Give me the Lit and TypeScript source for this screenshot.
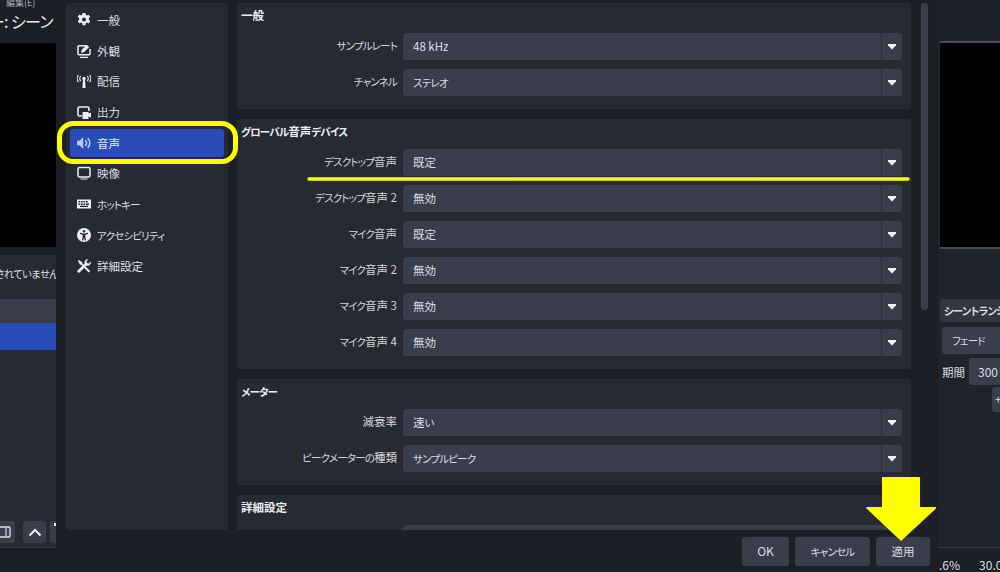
import { LitElement, html, css, svg } from 'lit';
import { customElement } from 'lit/decorators.js';

const NAV = [
  { id: 'gear', label: '一般' },
  { id: 'look', label: '外観' },
  { id: 'stream', label: '配信' },
  { id: 'output', label: '出力' },
  { id: 'audio', label: '音声', active: true },
  { id: 'video', label: '映像' },
  { id: 'keys', label: 'ホットキー' },
  { id: 'access', label: 'アクセシビリティ' },
  { id: 'tools', label: '詳細設定' },
];

const GROUPS = [
  {
    title: '一般',
    rows: [['サンプルレート', '48 kHz'], ['チャンネル', 'ステレオ']],
  },
  {
    title: 'グローバル音声デバイス',
    rows: [
      ['デスクトップ音声', '既定'],
      ['デスクトップ音声 2', '無効'],
      ['マイク音声', '既定'],
      ['マイク音声 2', '無効'],
      ['マイク音声 3', '無効'],
      ['マイク音声 4', '無効'],
    ],
  },
  {
    title: 'メーター',
    rows: [['減衰率', '速い'], ['ピークメーターの種類', 'サンプルピーク']],
  },
  {
    title: '詳細設定',
    rows: [['', '']],
  },
];

const ICONS: Record<string, unknown> = {
  gear: svg`<path fill-rule="evenodd" d="M5.600 0h2.800l.4 1.900 1.200.6 1.800-.8 1.400 2.400-1.400 1.300v1.300l1.400 1.300-1.400 2.400-1.800-.8-1.200.7-.4 1.900H5.600l-.4-1.900-1.200-.7-1.800.8L.8 8l1.400-1.300V5.400L.8 4l1.400-2.400 1.800.8 1.200-.6zM7 4.500a2 2 0 1 0 0 4 2 2 0 0 0 0-4z"/>`,
  look: svg`<path fill="none" stroke="currentColor" stroke-width="1.500" d="M9 1.800H2a1 1 0 0 0-1 1v7a1 1 0 0 0 1 1h10a1 1 0 0 0 1-1V5"/><path d="M3 12.800h8V14H3zM4 9l.8-3.200L9.800.8l2.400 2.200-5 5z"/>`,
  stream: svg`<path d="M6 5h2L8.600 14H5.400z"/><circle cx="7" cy="4.500" r="1.700"/><path fill="none" stroke="currentColor" stroke-width="1.100" d="M3.800 2a4 4 0 0 0 0 5.200M10.200 2a4 4 0 0 1 0 5.200M1.500 1a6 6 0 0 0 0 7.200M12.500 1a6 6 0 0 1 0 7.200"/>`,
  output: svg`<path fill="none" stroke="currentColor" stroke-width="1.600" d="M5 11H2.500a1.500 1.500 0 0 1-1.500-1.500v-6A1.500 1.500 0 0 1 2.500 2h8A1.500 1.500 0 0 1 12 3.500V6"/><path d="M5.500 7h6v1.500l2.500-1v5l-2.500-1V14h-6z"/>`,
  audio: svg`<path d="M0 4.800h2.500L6.200 1v12L2.500 9.200H0z"/><path fill="none" stroke="currentColor" stroke-width="1.600" d="M8.200 4a4 4 0 0 1 0 6M10.700 2a7 7 0 0 1 0 10"/>`,
  video: svg`<rect x="1" y="1.500" width="12" height="9.500" rx="1.500" fill="none" stroke="currentColor" stroke-width="1.500"/><path d="M3.500 12.500h7v1h-7z"/>`,
  keys: svg`<path fill-rule="evenodd" d="M0 2.500h14v9H0zM1.500 4v1.500h1.700V4zm2.500 0v1.500h1.700V4zm2.500 0v1.500h1.700V4zm2.500 0v1.500h1.700V4zM1.500 6.400v1.500h1.700V6.400zm2.500 0v1.500h1.700V6.400zm2.500 0v1.500h1.700V6.400zm2.500 0v1.500h3V6.400zM3 8.800v1.200h8V8.800z"/>`,
  access: svg`<path fill-rule="evenodd" d="M7 0a7 7 0 1 1 0 14A7 7 0 0 1 7 0zm0 2a1.300 1.300 0 1 0 0 2.600A1.300 1.300 0 0 0 7 2zM3 4.800v1.200l2.700.8v2l-.8 3.400 1.200.3L7 9.400l.9 3.100 1.200-.3-.8-3.400v-2L11 6V4.800L7.800 5.400H6.200z"/>`,
  tools: svg`<path d="M.9 1.900 1.900.9l3.300 2.300.2 1.300 7.800 7.500-1.500 1.500-7.500-7.800-1.300-.2z"/><path d="M10.700.2a3.200 3.200 0 0 0-3 4.300L.8 11.300a1.400 1.400 0 0 0 2 2l6.800-6.800a3.200 3.200 0 0 0 4.200-3.900l-2 2-1.800-.5-.5-1.800 2-2a3.200 3.200 0 0 0-.6-.1z"/>`,
};

// the original UI font has narrow kana, so kana runs get their own tighter span
function jp(text: string) {
  return text.split(/([\u3040-\u30ff]+)/).map((part, i) =>
    i % 2 ? html`<span class="k">${part}</span>` : part
  );
}

@customElement('app-root')
export class AppRoot extends LitElement {
  static styles = css`
    :host {
      display: block;
      position: relative;
      width: 1000px;
      height: 572px;
      overflow: hidden;
      background: #1d1f27;
      color: #dcdde0;
      font-family: "Noto Sans CJK JP", "Liberation Sans", sans-serif;
      font-size: 11.5px;
      font-feature-settings: "palt";
    }
    .k {
      font-size: 10.5px;
      letter-spacing: -0.8px;
    }

    /* main window behind the dialog */
    .back {
      display: flex;
      justify-content: space-between;
      height: 572px;
    }
    .left, .right {
      display: flex;
      flex-direction: column;
      overflow: hidden;
    }
    .left { width: 56px; }
    .right { width: 62px; }
    .menu {
      height: 10px;
      line-height: 6px;
      font-size: 9px;
      color: #a9aab0;
      padding-left: 6px;
      white-space: nowrap;
      overflow: hidden;
    }
    .title {
      display: flex;
      justify-content: flex-end;
      height: 33px;
      padding-right: 3px;
      overflow: hidden;
      white-space: nowrap;
      font-size: 16px;
      letter-spacing: -0.6px;
      line-height: 23px;
      color: #eceded;
    }
    .preview {
      height: 204px;
      background: #000;
      flex: none;
    }
    .left .sources {
      margin-top: 8px;
      flex: 1;
      background: #272a33;
      display: flex;
      flex-direction: column;
    }
    .no-src {
      height: 36px;
      padding-top: 2px;
      box-sizing: border-box;
      line-height: 32px;
      white-space: nowrap;
      display: flex;
      justify-content: flex-end;
      overflow: hidden;
    }
    .no-src div { margin-right: -2px; }
    .list-head { height: 24px; margin-top: 8px; background: #3a3d4b; }
    .list-sel { height: 27px; background: #284cb8; }
    .list-rest { flex: 1; }
    .tool-row {
      display: flex;
      gap: 4px;
      height: 22px;
      margin-bottom: 4px;
      margin-left: -8px;
    }
    .tool {
      flex: none;
      width: 23px;
      height: 22px;
      border-radius: 3px;
      background: #3a3d4b;
      display: flex;
      align-items: center;
      justify-content: center;
    }
    .tool.wide { margin-right: 4px; }
    .tool.cut { justify-content: flex-start; align-items: flex-start; padding: 2px 0 0 4px; box-sizing: border-box; }
    .status-line { height: 24px; background: #1d1f27; border-top: 1px solid #3a3c44; flex: none; }

    .right { background: #21232b; }
    .right .top { height: 41px; flex: none; background: #1f2129; }
    .right .rule { height: 2px; margin-left: 2px; flex: none; background: #4a4b52; }
    .right .preview { margin-left: 2px; height: 204px; border-bottom: 2px solid #4a4b52; }
    .trans {
      flex: 1;
      padding: 50px 0 0 2px;
      display: flex;
      flex-direction: column;
      white-space: nowrap;
    }
    .trans-head {
      height: 23px;
      line-height: 22px;
      padding-left: 4px;
      font-weight: 700;
      background: #33363f;
      border-radius: 3px 0 0 3px;
    }
    .trans-sel {
      height: 27px;
      line-height: 27px;
      margin: 5px 0 4px 2px;
      padding-left: 10px;
      background: #3a3d4b;
      border-radius: 3px 0 0 3px;
    }
    .dur { display: flex; align-items: center; height: 27px; padding-left: 2px; gap: 4px; }
    .dur-box {
      flex: 1;
      height: 27px;
      line-height: 27px;
      padding-left: 9px;
      background: #3a3d4b;
      border-radius: 3px 0 0 3px;
      font-size: 12px;
    }
    .plus {
      width: 20px;
      height: 25px;
      margin: 2px 0 0 52px;
      background: #3a3d4b;
      border-radius: 3px 0 0 3px;
      line-height: 25px;
      padding-left: 3px;
      box-sizing: border-box;
    }
    .stats {
      margin-top: auto;
      height: 25px;
      box-sizing: border-box;
      padding: 9px 0 0 1px;
      line-height: 16px;
      display: flex;
      gap: 19px;
      border-top: 1px solid #3a3c44;
      background: #1d1f27;
      font-size: 12px;
      white-space: nowrap;
    }

    /* settings dialog, on top of the window */
    .dialog {
      position: absolute;
      left: 56px;
      top: 0;
      width: 882px;
      height: 572px;
      background: #1d1f27;
      display: flex;
      flex-direction: column;
    }
    .body {
      display: flex;
      height: 527px;
      padding: 3px 0 0 10px;
      box-sizing: content-box;
    }
    .side {
      width: 162px;
      flex: none;
      box-sizing: border-box;
      padding: 3px 4px;
      background: #272a33;
      border-radius: 3px;
      display: flex;
      flex-direction: column;
      gap: 2.7px;
    }
    .item {
      display: flex;
      align-items: center;
      gap: 6px;
      height: 28px;
      flex: none;
      padding-left: 7px;
      border-radius: 3px;
      white-space: nowrap;
    }
    .item svg { width: 14px; height: 14px; fill: currentColor; color: #eeeef0; flex: none; }
    .item.on { background: #284cb8; color: #e6eaf8; }
    .item.on svg { color: #b9c8f2; }
    .groups {
      width: 674px;
      flex: none;
      margin-left: 9px;
      display: flex;
      flex-direction: column;
      gap: 10px;
      overflow: hidden;
    }
    .group {
      flex: none;
      box-sizing: border-box;
      padding: 0 9px 13px 4px;
      background: #272a33;
      border-radius: 3px;
    }
    .group h3 {
      margin: 0;
      height: 30px;
      font-size: 11.5px;
      font-weight: 700;
      line-height: 24px;
      color: #eceded;
    }
    .rows { display: flex; flex-direction: column; gap: 9px; }
    .row { display: flex; align-items: center; gap: 6px; height: 27px; }
    .row label { width: 156px; text-align: right; white-space: nowrap; color: #d4d5d9; margin-top: -4px; }
    .select {
      flex: 1;
      height: 27px;
      display: flex;
      align-items: center;
      background: #3a3d4b;
      border-radius: 3px;
    }
    .select .val { flex: 1; padding-left: 10px; margin-top: -1px; }
    .caret {
      width: 21px;
      height: 27px;
      border-left: 1px solid #2b2e38;
      box-sizing: border-box;
      display: flex;
      align-items: center;
      justify-content: center;
    }
    .scroll {
      width: 7px;
      height: 307px;
      margin-left: 10px;
      flex: none;
      background: #3a3d4b;
      border-radius: 3px;
    }
    .footer {
      display: flex;
      justify-content: flex-end;
      gap: 6px;
      padding: 7px 8px 0 0;
    }
    .btn {
      height: 29px;
      line-height: 28px;
      text-align: center;
      background: #3a3d4b;
      border-radius: 3px;
      box-sizing: border-box;
    }
    .ok { width: 47px; font-size: 12px; }
    .cancel { width: 75px; }
    .apply { width: 54px; }

    /* yellow marks drawn on the screenshot */
    .marks { position: absolute; left: 0; top: 0; pointer-events: none; }
  `;

  caret() {
    return html`<div class="caret">
      <svg width="8" height="6" viewBox="0 0 8 6"><path fill="#f2f2f4" d="M0 0h8v1.200L4 5.500 0 1.200z"/></svg>
    </div>`;
  }

  renderBack() {
    return html`<div class="back">
      <div class="left">
        <div class="menu">編集(E)</div>
        <div class="title">プレビュー: シーン</div>
        <div class="preview"></div>
        <div class="sources">
          <div class="no-src"><div>選択${jp('されていません')}</div></div>
          <div class="list-head"></div>
          <div class="list-sel"></div>
          <div class="list-rest"></div>
          <div class="tool-row">
            <div class="tool wide">
              <svg width="14" height="12" viewBox="0 0 14 12"><rect x="1" y="1" width="12" height="10" rx="1" fill="none" stroke="#e6e6e8" stroke-width="1.300"/><path d="M8 2h2v8H8z" fill="#9a9ca4"/></svg>
            </div>
            <div class="tool">
              <svg width="14" height="9" viewBox="0 0 14 9"><path d="M1.500 7.500 7 2l5.500 5.500" fill="none" stroke="#f0f0f2" stroke-width="2"/></svg>
            </div>
            <div class="tool cut">
              <svg width="3" height="3" viewBox="0 0 3 3"><path d="M0 0h3v3H0z" fill="#e6e6e8"/></svg>
            </div>
          </div>
        </div>
        <div class="status-line"></div>
      </div>
      <div class="right">
        <div class="top"></div>
        <div class="rule"></div>
        <div class="preview"></div>
        <div class="trans">
          <div class="trans-head">${jp('シーントランジション')}</div>
          <div class="trans-sel">${jp('フェード')}</div>
          <div class="dur">期間<div class="dur-box">300 ms</div></div>
          <div class="plus">+</div>
        </div>
        <div class="stats"><span>.6%</span><span>30.00 / 30.00 FPS</span></div>
      </div>
    </div>`;
  }

  renderDialog() {
    return html`<div class="dialog">
      <div class="body">
        <div class="side">
          ${NAV.map(n => html`
            <div class="item ${n.active ? 'on' : ''}">
              <svg viewBox="0 0 14 14">${ICONS[n.id]}</svg>
              <span>${jp(n.label)}</span>
            </div>
          `)}
        </div>
        <div class="groups">
          ${GROUPS.map(g => html`
            <div class="group">
              <h3>${jp(g.title)}</h3>
              <div class="rows">
                ${g.rows.map(r => html`
                  <div class="row">
                    <label>${jp(r[0])}</label>
                    <div class="select"><div class="val">${jp(r[1])}</div>${this.caret()}</div>
                  </div>
                `)}
              </div>
            </div>
          `)}
        </div>
        <div class="scroll"></div>
      </div>
      <div class="footer">
        <div class="btn ok">OK</div>
        <div class="btn cancel">${jp('キャンセル')}</div>
        <div class="btn apply">適用</div>
      </div>
    </div>`;
  }

  render() {
    return html`
      ${this.renderBack()}
      ${this.renderDialog()}
      <svg class="marks" width="1000" height="572" viewBox="0 0 1000 572">
        <rect x="59.500" y="123.500" width="176" height="38" rx="14" fill="none" stroke="#ffff00" stroke-width="5"/>
        <path d="M309 179H908" stroke="#ffff00" stroke-width="3.500" stroke-linecap="round"/>
        <path d="M883 477H919a1 1 0 0 1 1 1V507H935a1 1 0 0 1 1 1.500L901 541 866.500 508.500A1 1 0 0 1 867 507H882V478a1 1 0 0 1 1-1z" fill="#ffff00"/>
      </svg>
    `;
  }
}
